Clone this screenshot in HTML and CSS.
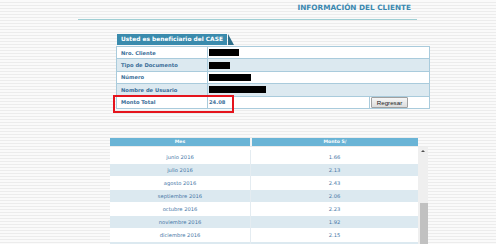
FILE: index.html
```html
<!DOCTYPE html>
<html lang="es">
<head>
  <meta charset="UTF-8">
  <meta name="viewport" content="width=device-width, initial-scale=1.0">
  <title>Información del Cliente</title>
  <link rel="stylesheet" href="styles.css">
</head>
<body>
  <div class="page-head">
    <h1>INFORMACIÓN DEL CLIENTE</h1>
  </div>

  <div class="client">
    <div class="tab-row">
      <span class="tab">Usted es beneficiario del CASE</span>
      <svg class="tab-corner" width="6" height="11" viewBox="0 0 6 11"><polygon points="0,0 6,11 0,11" fill="#2e6f8a"/></svg>
    </div>
    <div class="client-box">
      <table class="client-table">
        <colgroup><col class="c1"><col class="c2"><col class="c3"></colgroup>
        <tr>
          <td class="label">Nro. Cliente</td>
          <td colspan="2"><span class="hidden-data" style="width: 30px;"></span></td>
        </tr>
        <tr class="alt">
          <td class="label">Tipo de Documento</td>
          <td colspan="2"><span class="hidden-data" style="width: 21px;"></span></td>
        </tr>
        <tr>
          <td class="label">Número</td>
          <td colspan="2"><span class="hidden-data" style="width: 42px;"></span></td>
        </tr>
        <tr class="alt">
          <td class="label">Nombre de Usuario</td>
          <td colspan="2"><span class="hidden-data" style="width: 57px;"></span></td>
        </tr>
        <tr>
          <td class="label">Monto Total</td>
          <td class="total">24.08</td>
          <td class="btn-cell"><button type="button">Regresar</button></td>
        </tr>
      </table>
      <div class="highlight"></div>
    </div>
  </div>

  <div class="history">
    <table class="history-head">
      <tr>
        <th class="h1">Mes</th>
        <th class="h2">Monto S/</th>
      </tr>
    </table>
    <div class="history-body">
      <div class="history-rows">
        <table class="history-table">
          <tr><td class="m">junio 2016</td><td>1.66</td></tr>
          <tr class="alt"><td class="m">julio 2016</td><td>2.13</td></tr>
          <tr><td class="m">agosto 2016</td><td>2.43</td></tr>
          <tr class="alt"><td class="m">septiembre 2016</td><td>2.06</td></tr>
          <tr><td class="m">octubre 2016</td><td>2.23</td></tr>
          <tr class="alt"><td class="m">noviembre 2016</td><td>1.92</td></tr>
          <tr><td class="m">diciembre 2016</td><td>2.15</td></tr>
          <tr class="alt"><td class="m"></td><td></td></tr>
        </table>
      </div>
      <div class="scrollbar">
        <span class="arrow"></span>
        <span class="thumb"></span>
      </div>
    </div>
  </div>
</body>
</html>
```

FILE: styles.css
```css
/* General Styling */
body {
  margin: 0;
  padding: 0;
  font-family: 'DejaVu Sans', Verdana, sans-serif;
  background: repeating-linear-gradient(to bottom, #fafafa 0, #fafafa 2px, #ececec 2px, #ececec 3px);
  color: #3b6e98;
  height: 244px;
  overflow: hidden;
}

/* Header */
.page-head {
  margin-left: 78px;
  width: 339px;
  height: 19px;
  border-bottom: 1px solid #9fcfd4;
  text-align: right;
}

.page-head h1 {
  margin: 0;
  padding: 3px 6px 0 0;
  font-size: 7.3px;
  line-height: 9px;
  color: #3a88b0;
}

/* Client info */
.client {
  margin: 14px 0 0 116px;
}

.tab-row {
  display: flex;
  align-items: flex-start;
  height: 12px;
}

.tab {
  margin-left: 1px;
  width: 110px;
  height: 11px;
  background: #3a8bad;
  color: white;
  font-size: 5.9px;
  font-weight: bold;
  line-height: 11px;
  text-align: center;
}

.tab-corner {
  margin-left: 1px;
}

.client-box {
  position: relative;
  width: 313px;
}

.client-table {
  width: 313px;
  border-collapse: collapse;
  border: 1px solid #a9cbdc;
  background: white;
  table-layout: fixed;
}

.client-table .c1 { width: 91px; }
.client-table .c2 { width: 162px; }
.client-table .c3 { width: 60px; }

.client-table td {
  height: 11.4px;
  padding: 0 4px;
  border: 1px solid #a9cbdc;
  font-size: 5.2px;
  line-height: 8px;
  vertical-align: middle;
}

.client-table tr.alt td {
  background: #dce9f0;
}

.client-table td.label {
  font-weight: bold;
}

.client-table td.total {
  font-weight: bold;
  padding-left: 1px;
}

.hidden-data {
  display: block;
  height: 7px;
  margin-left: -3px;
  background: #000;
}

.client-table td.btn-cell {
  padding: 0 0 0 1px;
}

button {
  display: block;
  width: 37px;
  height: 11px;
  padding: 0;
  border: 1px solid #a0a0a0;
  border-radius: 1px;
  background: linear-gradient(to bottom, #f6f6f6, #dcdcdc);
  font-family: 'Liberation Sans', Arial, sans-serif;
  font-size: 6.2px;
  color: #222;
  cursor: pointer;
}

.highlight {
  position: absolute;
  left: -3px;
  top: 49px;
  width: 121px;
  height: 18px;
  box-sizing: border-box;
  border: 2px solid #e5141d;
}

/* Monthly history */
.history {
  margin: 29px 0 0 110px;
  width: 319px;
}

.history-head {
  width: 308px;
  border-collapse: collapse;
  table-layout: fixed;
}

.history-head th {
  height: 8px;
  padding: 0;
  background: #6ab4d6;
  color: white;
  font-size: 4.6px;
  line-height: 8px;
}

.history-head th.h1 {
  width: 140px;
  border-right: 2px solid #f4f4f4;
}

.history-body {
  display: flex;
  margin-top: 1px;
  height: 97px;
  overflow: hidden;
}

.history-rows {
  width: 308px;
  padding-top: 3px;
  background: white;
  overflow: hidden;
}

.history-table {
  width: 308px;
  border-collapse: collapse;
  table-layout: fixed;
}

.history-table td {
  height: 12px;
  padding: 0;
  border-top: 1px solid white;
  font-size: 5.2px;
  line-height: 12px;
  text-align: center;
  color: #4777a6;
}

.history-table td.m {
  width: 140px;
  border-right: 1px solid #e4ecf1;
}

.history-table tr.alt td {
  background: #dce9f0;
}

.scrollbar {
  width: 10px;
  background: #efefef;
}

.scrollbar .arrow {
  display: block;
  margin: 3px 0 0 3px;
  width: 0;
  height: 0;
  border-left: 2px solid transparent;
  border-right: 2px solid transparent;
  border-bottom: 2px solid #505050;
}

.scrollbar .thumb {
  display: block;
  margin: 51px 0 0 2px;
  width: 8px;
  height: 60px;
  background: #c1c1c1;
}
```
